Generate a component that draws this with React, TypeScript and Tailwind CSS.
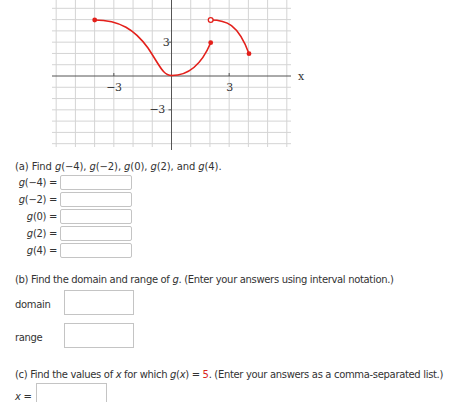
import React from "react";

const X0 = 171.5;
const Y0 = 76;
const UX = 19.22;
const UY = 11.28;

function Graph() {
  const verts = [];
  const hors = [];
  for (let u = -6; u <= 6; u++) {
    if (u === 0) continue;
    const x = X0 + u * UX;
    verts.push(<line key={"v" + u} x1={x} y1={0} x2={x} y2={147} stroke="#d4d4d4" strokeWidth={1} />);
  }
  for (let v = -6; v <= 6; v++) {
    if (v === 0) continue;
    const y = Y0 - v * UY;
    hors.push(<line key={"h" + v} x1={52} y1={y} x2={291} y2={y} stroke="#d4d4d4" strokeWidth={1} />);
  }
  const red = "#e3201b";
  return (
    <svg width="320" height="155" viewBox="0 0 320 155" className="block">
      {verts}
      {hors}
      <line x1={52} y1={Y0} x2={291} y2={Y0} stroke="#555" strokeWidth={1} />
      <line x1={X0} y1={0} x2={X0} y2={150} stroke="#555" strokeWidth={1} />
      <line x1={X0 - 3 * UX} y1={Y0 - 3} x2={X0 - 3 * UX} y2={Y0} stroke="#555" strokeWidth={1} />
      <line x1={X0 + 3 * UX} y1={Y0 - 3} x2={X0 + 3 * UX} y2={Y0} stroke="#555" strokeWidth={1} />
      <line x1={X0 - 3} y1={Y0 - 3 * UY} x2={X0} y2={Y0 - 3 * UY} stroke="#555" strokeWidth={1} />
      <line x1={X0 - 3} y1={Y0 + 3 * UY} x2={X0} y2={Y0 + 3 * UY} stroke="#555" strokeWidth={1} />
      <g fontFamily="'DejaVu Serif', 'Liberation Serif', serif" fontSize="11" fill="#333">
        <text x={166} y={46} textAnchor="middle">3</text>
        <text x={114} y={91} textAnchor="middle">−3</text>
        <text x={229.5} y={91} textAnchor="middle">3</text>
        <text x={162} y={113} textAnchor="end" dx={3}>−3</text>
        <text x={301} y={80} textAnchor="middle">x</text>
      </g>
      <g fill="none" stroke={red} strokeWidth={1.6} strokeLinecap="round">
        <path d="M94.7,20 C120,20 135,30 148,48 C160,66 163,75.5 171.7,75.5" />
        <path d="M171.7,75.5 C185,75.5 200,68 210.7,42.7" />
        <path d="M210.7,20 C226,20 238,24 249,53.7" />
      </g>
      <circle cx={94.7} cy={20} r={2.4} fill={red} />
      <circle cx={210.7} cy={42.7} r={2.4} fill={red} />
      <circle cx={249} cy={53.7} r={2.4} fill={red} />
      <circle cx={210.7} cy={20} r={2.4} fill="#fff" stroke={red} strokeWidth={1.3} />
    </svg>
  );
}

function G({ children }: { children: React.ReactNode }) {
  return (
    <>
      <i>g</i>({children})
    </>
  );
}

function Row({ arg }: { arg: string }) {
  return (
    <div className="flex items-center h-[15px]">
      <span className="w-[45px] text-right pr-[3px] whitespace-nowrap">
        <G>{arg}</G> =
      </span>
      <div className="w-[72px] h-[15px] border border-[#c4c4c4] rounded-[2px] bg-white" />
    </div>
  );
}

export default function App() {
  return (
    <div className="w-[474px] h-[402px] bg-white overflow-hidden font-['DejaVu_Sans',Verdana,sans-serif] text-[10px] tracking-[-0.33px] text-[#333]">
      <Graph />
      <div className="pl-[15px]">
        <p className="mt-[5px] leading-[14px] whitespace-nowrap tracking-[-0.1px]">
          (a) Find <G>−4</G>, <G>−2</G>, <G>0</G>, <G>2</G>, and <G>4</G>.
        </p>
        <div className="mt-[1px] flex flex-col gap-[2px]">
          <Row arg="−4" />
          <Row arg="−2" />
          <Row arg="0" />
          <Row arg="2" />
          <Row arg="4" />
        </div>
        <p className="mt-[15px] leading-[14px] whitespace-nowrap">
          (b) Find the domain and range of <i>g</i>. (Enter your answers using interval notation.)
        </p>
        <div className="mt-[3px] flex items-center">
          <span className="w-[49px] pt-[3px]">domain</span>
          <div className="w-[70px] h-[25px] border border-[#c4c4c4]" />
        </div>
        <div className="mt-[8px] flex items-center">
          <span className="w-[49px] pt-[3px]">range</span>
          <div className="w-[70px] h-[25px] border border-[#c4c4c4]" />
        </div>
        <p className="mt-[20px] leading-[14px] whitespace-nowrap">
          (c) Find the values of <i>x</i> for which <G><i>x</i></G> = <span className="text-[#d9261c]">5</span>. (Enter your answers as a comma-separated list.)
        </p>
        <div className="mt-[1px] flex items-center">
          <span className="w-[21px] pt-[1px]">
            <i>x</i> =
          </span>
          <div className="w-[71px] h-[25px] border border-[#c4c4c4]" />
        </div>
      </div>
    </div>
  );
}
